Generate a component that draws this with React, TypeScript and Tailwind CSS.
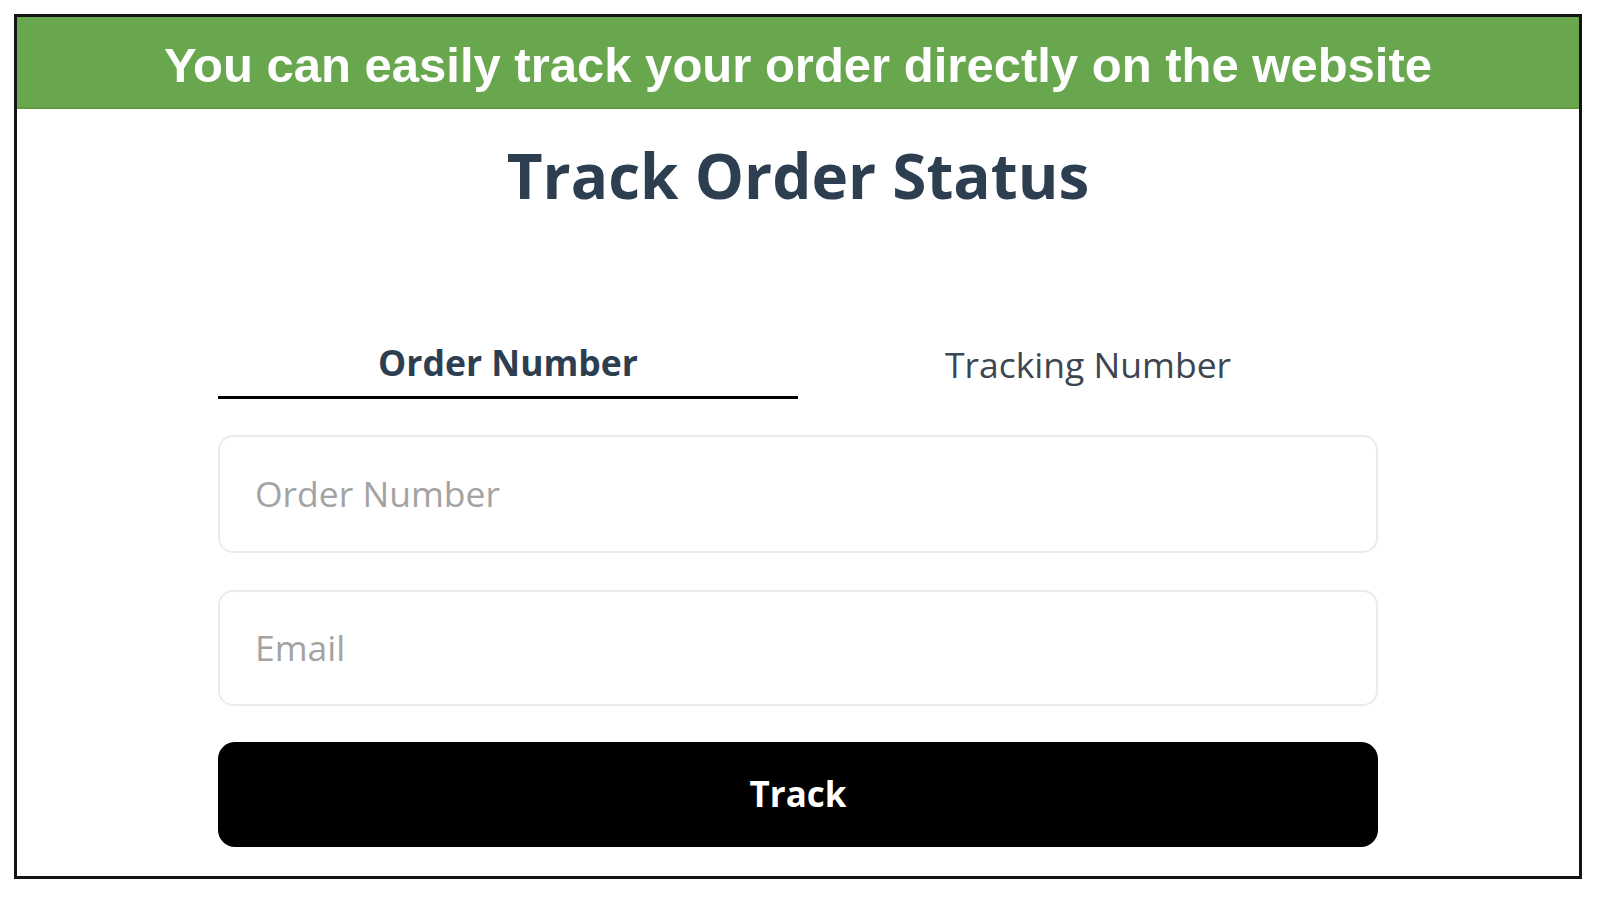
export default function App() {
  const os = "font-['Open_Sans','Noto_Sans',sans-serif]";
  return (
    <div className="w-[1600px] h-[900px] bg-white pt-[14px] pl-[14px]">
      <div className="w-[1568px] h-[865px] border-[3px] border-[#141414] flex flex-col bg-white">
        <div className="h-[92px] shrink-0 bg-[#68a74e] border-b-2 border-[#5c9e3c] flex items-center justify-center pt-[6px]">
          <span className="text-white font-bold text-[49px] leading-none font-['Liberation_Sans',Arial,sans-serif]">
            You can easily track your order directly on the website
          </span>
        </div>
        <div className={`flex flex-col px-[201px] ${os}`}>
          <h1 className="mt-[35px] text-center text-[62px] leading-none font-bold text-[#2c3e50]">
            Track Order Status
          </h1>
          <div className="mt-[139px] flex">
            <div className="flex-1 text-center text-[35.5px] leading-none font-bold text-[#2c3e50] pb-[15px] border-b-[3px] border-black">
              Order Number
            </div>
            <div className="flex-1 text-center text-[35.5px] leading-none text-[#3d4650] pt-[2px] pb-[13px] border-b-[3px] border-transparent">
              Tracking Number
            </div>
          </div>
          <div className="mt-[36px] h-[118px] rounded-[15px] border-2 border-[#ebebeb] flex items-center pl-[35px] text-[35.5px] text-[#a3a3a3]">
            Order Number
          </div>
          <div className="mt-[37px] h-[116px] rounded-[15px] border-2 border-[#ebebeb] flex items-center pl-[35px] text-[35.5px] text-[#a3a3a3]">
            Email
          </div>
          <div className="mt-[36px] h-[105px] rounded-[17px] bg-black flex items-center justify-center text-white text-[35px] font-bold">
            Track
          </div>
        </div>
      </div>
    </div>
  );
}
